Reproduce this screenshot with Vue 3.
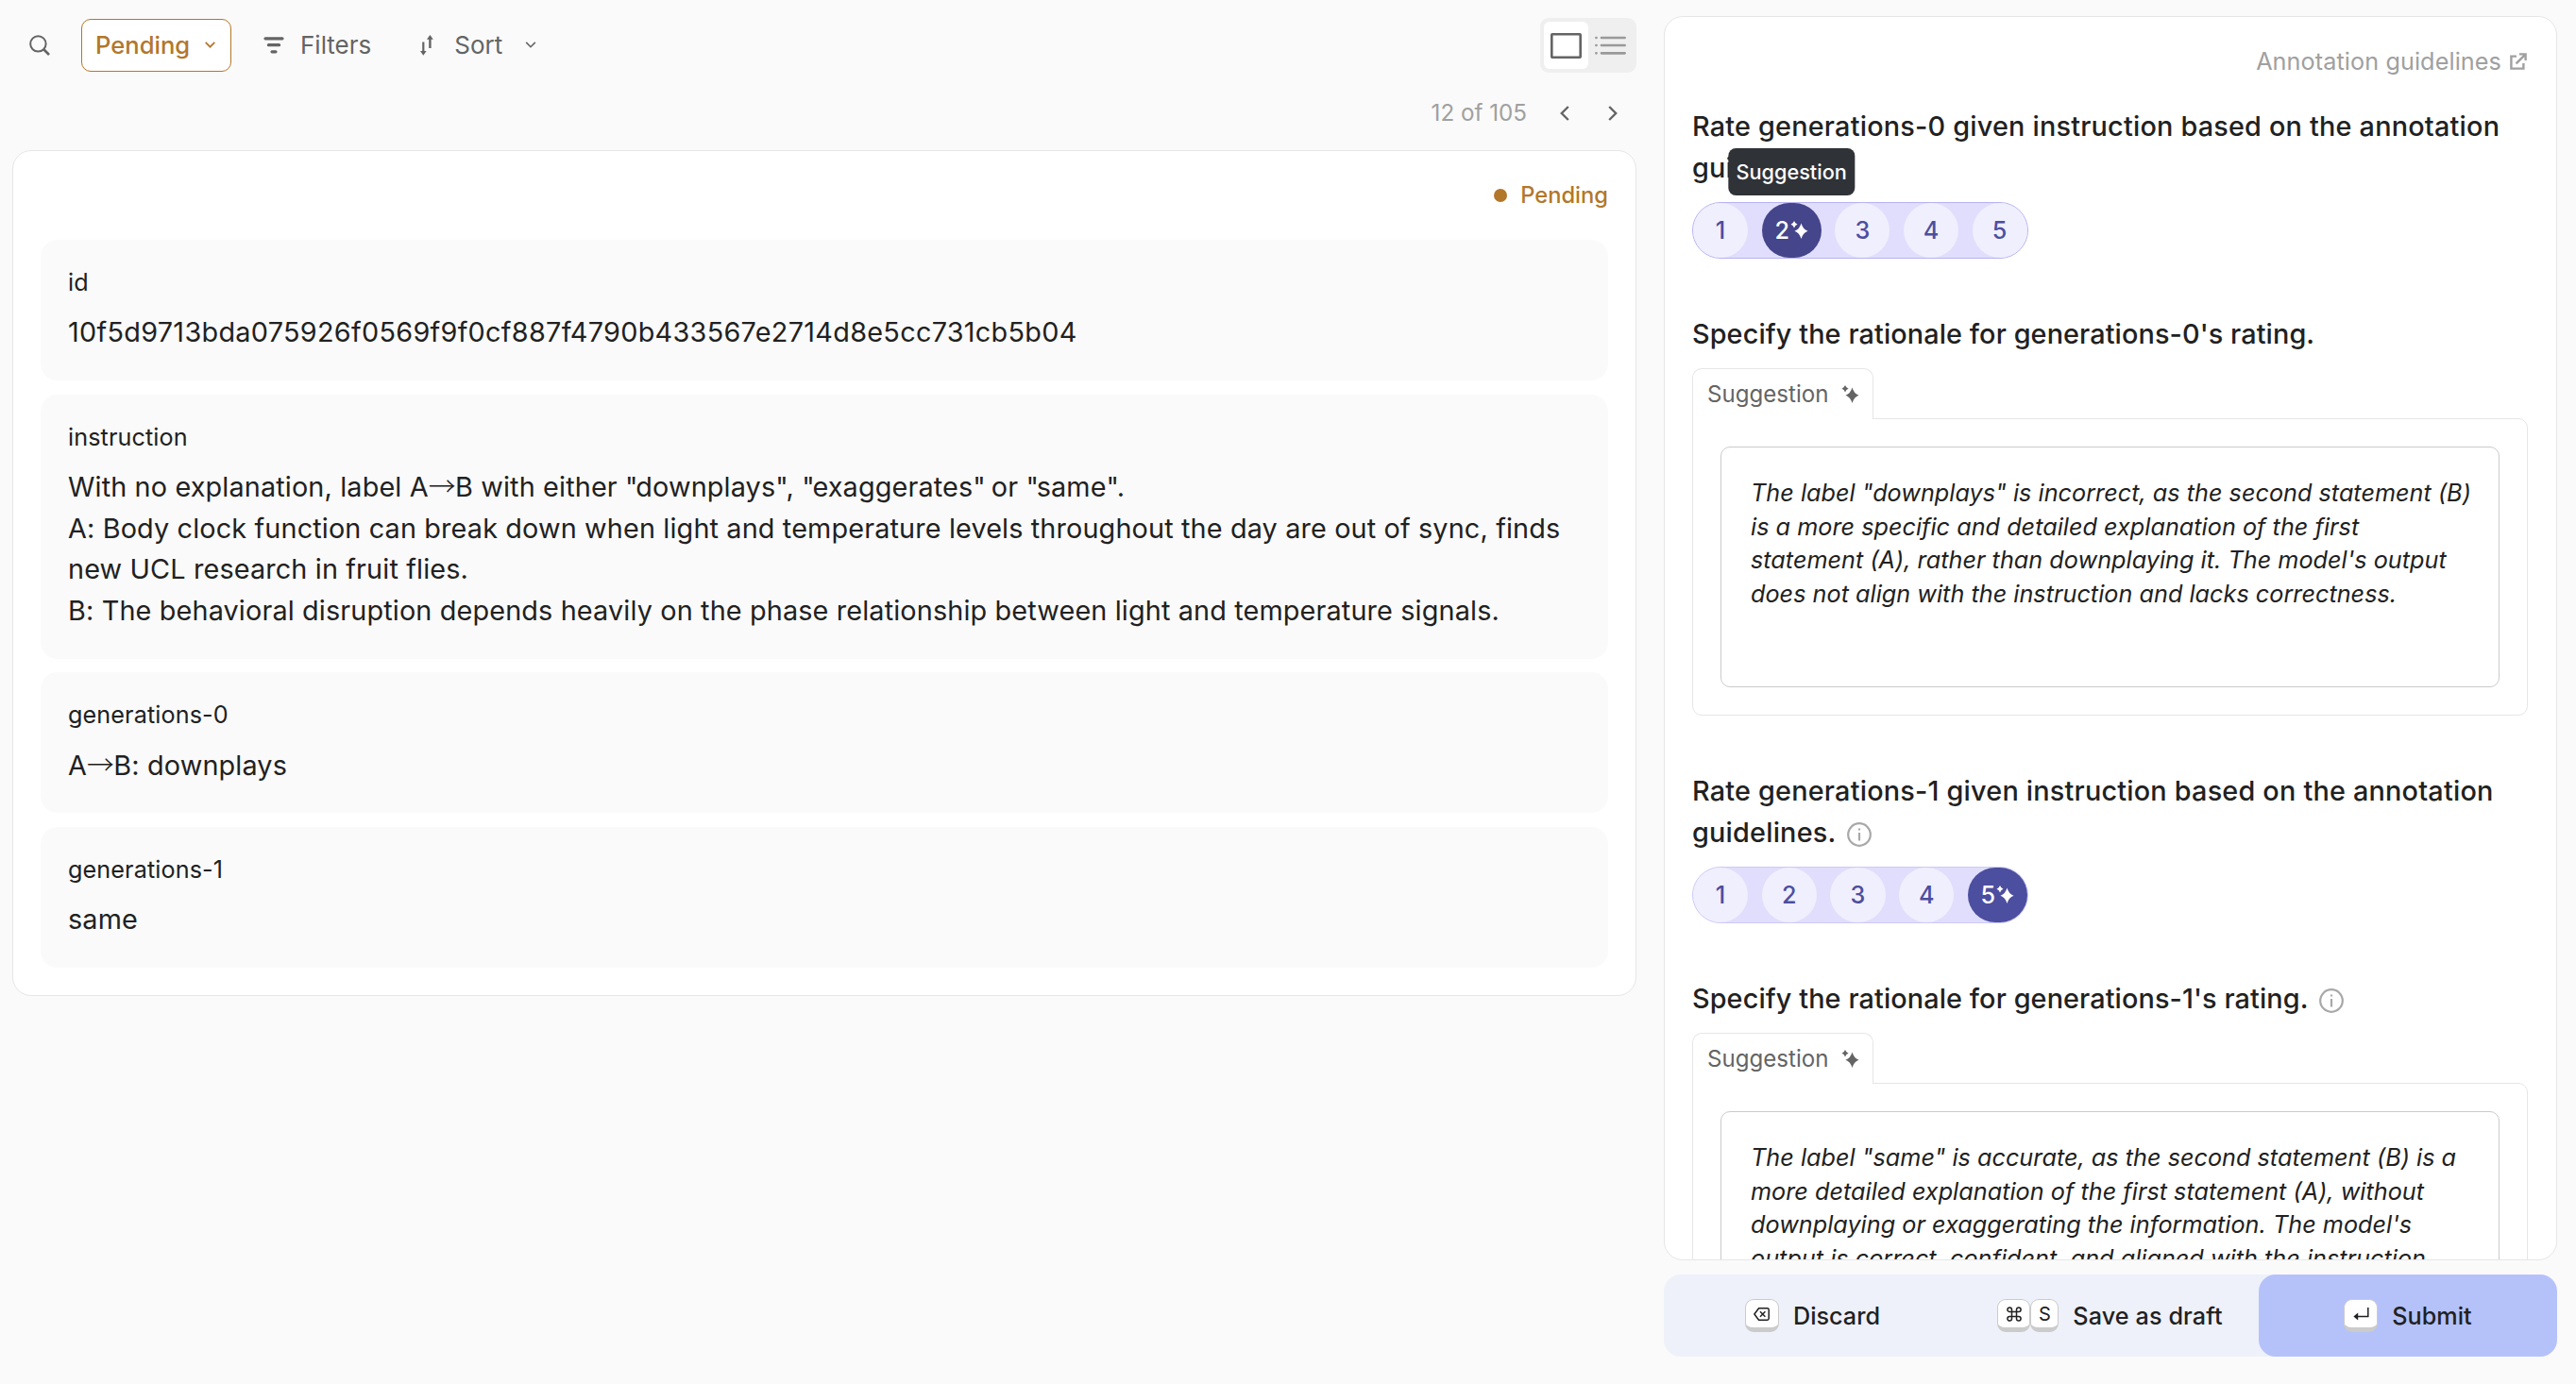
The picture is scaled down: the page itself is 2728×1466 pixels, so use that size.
<script setup>
import { ref } from 'vue'

const fields = [
  { name: 'id', lines: ['10f5d9713bda075926f0569f9f0cf887f4790b433567e2714d8e5cc731cb5b04'] },
  {
    name: 'instruction',
    lines: [
      'With no explanation, label A→B with either "downplays", "exaggerates" or "same".',
      'A: Body clock function can break down when light and temperature levels throughout the day are out of sync, finds new UCL research in fruit flies.',
      'B: The behavioral disruption depends heavily on the phase relationship between light and temperature signals.',
    ],
  },
  { name: 'generations-0', lines: ['A→B: downplays'] },
  { name: 'generations-1', lines: ['same'] },
]

// keeps arrows and quotes as their own chunks so they can be styled apart
function chunks(line) {
  return line.split(/([→"])/)
}

const questions = ref([
  {
    id: 'rating-0',
    type: 'rating',
    title: 'Rate generations-0 given instruction based on the annotation guidelines.',
    suggested: 2,
    hovered: true,
    info: false,
  },
  {
    id: 'rationale-0',
    type: 'text',
    title: "Specify the rationale for generations-0's rating.",
    text: 'The label "downplays" is incorrect, as the second statement (B) is a more specific and detailed explanation of the first statement (A), rather than downplaying it. The model\'s output does not align with the instruction and lacks correctness.',
    info: false,
  },
  {
    id: 'rating-1',
    type: 'rating',
    title: 'Rate generations-1 given instruction based on the annotation guidelines.',
    suggested: 5,
    hovered: false,
    info: true,
  },
  {
    id: 'rationale-1',
    type: 'text',
    title: "Specify the rationale for generations-1's rating.",
    text: 'The label "same" is accurate, as the second statement (B) is a more detailed explanation of the first statement (A), without downplaying or exaggerating the information. The model\'s output is correct, confident, and aligned with the instruction given.',
    info: true,
  },
])
</script>

<template>
  <div class="page">
    <main class="record">
      <div class="toolbar">
        <button class="toolbar__search">
          <svg width="22" height="22" viewBox="0 0 22 22" fill="none" stroke="currentColor" stroke-width="2">
            <circle cx="9.4" cy="9.4" r="8.2" />
            <path d="M15 15l6 6" stroke-width="2.6" />
          </svg>
        </button>
        <button class="status-select">
          Pending
          <svg width="11" height="7" viewBox="0 0 11 7" fill="none" stroke="currentColor" stroke-width="1.7">
            <path d="M.7.9l4.8 4.8L10.3.9" />
          </svg>
        </button>
        <button class="toolbar__button">
          <svg width="22" height="18" viewBox="0 0 22 18" fill="none" stroke="currentColor" stroke-width="3.2" stroke-linecap="round">
            <path d="M2 1.8h18M5.4 8.7h11.2M9 15.8h4" />
          </svg>
          Filters
        </button>
        <button class="toolbar__button toolbar__button--sort">
          <svg width="14" height="22" viewBox="0 0 14 22" fill="currentColor">
            <path d="M2.2 7.5h2.2V17h2.2l-3.3 4.8L0 17h2.2zM9.2 14h2.4V4.8h2.2L10.4 0 7 4.8h2.2z" />
          </svg>
          Sort
          <svg width="12" height="7" viewBox="0 0 11 7" fill="none" stroke="currentColor" stroke-width="1.6">
            <path d="M.7.9l4.8 4.8L10.3.9" />
          </svg>
        </button>
        <div class="view-switch">
          <span class="view-switch__item view-switch__item--active">
            <svg width="33" height="27" viewBox="0 0 33 27" fill="none" stroke="currentColor" stroke-width="2.6">
              <rect x="1.3" y="1.3" width="30.4" height="24.4" rx=".6" />
            </svg>
          </span>
          <span class="view-switch__item">
            <svg width="33" height="20" viewBox="0 0 33 20" fill="none" stroke="currentColor" stroke-width="2.7" stroke-linecap="round">
              <path d="M7 2h24.6M7 10h24.6M7 18.3h24.6M1.4 2h.1M1.4 10h.1M1.4 18.3h.1" />
            </svg>
          </span>
        </div>
      </div>

      <div class="pagination">
        <span>12 of 105</span>
        <svg width="10" height="16" viewBox="0 0 10 16" fill="none" stroke="currentColor" stroke-width="2.4">
          <path d="M8.8 1L1.8 8l7 7" />
        </svg>
        <svg width="10" height="16" viewBox="0 0 10 16" fill="none" stroke="currentColor" stroke-width="2.4">
          <path d="M1.2 1l7 7-7 7" />
        </svg>
      </div>

      <article class="card">
        <div class="card__status"><i class="card__dot"></i>Pending</div>
        <section v-for="field in fields" :key="field.name" class="field" :class="`field--${field.name}`">
          <h4 class="field__name">{{ field.name }}</h4>
          <p v-for="(line, i) in field.lines" :key="i" class="field__line">
            <span v-for="(chunk, c) in chunks(line)" :key="c" :class="{ arrow: chunk === '→', quote: chunk === '&quot;' }">{{ chunk }}</span>
          </p>
        </section>
      </article>
    </main>

    <aside class="side">
      <form class="form">
        <a class="guidelines">
          Annotation guidelines
          <svg width="18" height="18" viewBox="0 0 18 18" fill="none" stroke="currentColor" stroke-width="2.4">
            <path d="M7 3.6H1.4v13h13V11M10 1.4h6.6V8M16.4 1.6L6.6 11.4" />
          </svg>
        </a>

        <div v-for="q in questions" :key="q.id" class="question">
          <h3 class="question__title" :class="`question__title--${q.type}`">
            {{ q.title }}
            <svg v-if="q.info" class="question__info" width="26" height="26" viewBox="0 0 26 26" fill="none" stroke="currentColor" stroke-width="2.2">
              <circle cx="13" cy="13" r="11.8" />
              <path d="M13 11v8.4M13 6.4v2" />
            </svg>
          </h3>

          <div v-if="q.type === 'rating'" class="rating" :class="{ 'rating--hover': q.hovered }">
            <span v-for="n in 5" :key="n" class="rating__item" :class="{ 'rating__item--on': n === q.suggested }">
              {{ n }}
              <svg v-if="n === q.suggested" class="rating__spark" width="19" height="20" viewBox="0 0 18 20" fill="currentColor">
                <path d="M11 2.5q1.8 6.4 7 8.3-5.2 1.9-7 8.3-1.8-6.4-7-8.3 5.2-1.9 7-8.3zM3.5 0q1 2.8 3.5 3.7Q4.5 4.6 3.5 7.4 2.5 4.6 0 3.7 2.5 2.8 3.5 0z" />
              </svg>
              <span v-if="q.hovered && n === q.suggested" class="tooltip">Suggestion</span>
            </span>
          </div>

          <div v-else class="suggestion">
            <div class="suggestion__tab">
              Suggestion
              <svg width="19" height="20" viewBox="0 0 18 20" fill="currentColor">
                <path d="M11 2.5q1.8 6.4 7 8.3-5.2 1.9-7 8.3-1.8-6.4-7-8.3 5.2-1.9 7-8.3zM3.5 0q1 2.8 3.5 3.7Q4.5 4.6 3.5 7.4 2.5 4.6 0 3.7 2.5 2.8 3.5 0z" />
              </svg>
            </div>
            <div class="suggestion__panel">
              <div class="suggestion__text">{{ q.text }}</div>
            </div>
          </div>
        </div>
      </form>

      <div class="actions">
        <button class="action action--discard">
          <kbd class="key key--wide">
            <svg width="17" height="14" viewBox="0 0 17 14" fill="none" stroke="currentColor" stroke-width="1.5">
              <path d="M5.6.8h9q1.6 0 1.6 1.6v9.2q0 1.6-1.6 1.6h-9L.9 7z" stroke-linejoin="round" />
              <path d="M7 4.3l5.4 5.4M12.4 4.3L7 9.7" />
            </svg>
          </kbd>
          Discard
        </button>
        <button class="action action--draft">
          <span class="keys">
            <kbd class="key key--cmd">
              <svg width="16" height="16" viewBox="0 0 16 16" fill="none" stroke="currentColor" stroke-width="1.5">
                <path d="M5.5 3.2v9.6a2.3 2.3 0 1 1-2.3-2.3h9.6a2.3 2.3 0 1 1-2.3 2.3V3.2a2.3 2.3 0 1 1 2.3 2.3H3.2a2.3 2.3 0 1 1 2.3-2.3z" />
              </svg>
            </kbd>
            <kbd class="key key--letter">S</kbd>
          </span>
          Save as draft
        </button>
        <button class="action action--submit">
          <kbd class="key key--wide">
            <svg width="17" height="14" viewBox="0 0 17 14" fill="none" stroke="currentColor" stroke-width="1.5">
              <path d="M15.8 0v9.5H3" />
              <path d="M5.2 5.5v8L.4 9.5z" fill="currentColor" stroke="none" />
            </svg>
          </kbd>
          Submit
        </button>
      </div>
    </aside>
  </div>
</template>

<style>
body {
  background: #fafafa;
}
</style>

<style scoped>
.page {
  display: grid;
  grid-template-columns: 1720px 946px;
  column-gap: 29px;
  box-sizing: border-box;
  height: 100vh;
  padding: 17px 20px 29px 13px;
  overflow: hidden;
  font-family: Inter, 'Liberation Sans', sans-serif;
  font-size: 25.2px;
  color: #212121;
}
.page * {
  box-sizing: border-box;
}
button {
  padding: 0;
  border: 0;
  background: none;
  color: inherit;
  font: inherit;
}
svg {
  flex: none;
}

/* toolbar */
.toolbar {
  display: flex;
  align-items: center;
  height: 62px;
  color: #646464;
  font-size: 26px;
}
.toolbar__search {
  display: flex;
  margin: 0 33px 0 18px;
}
.status-select {
  display: flex;
  align-items: center;
  gap: 16px;
  width: 159px;
  height: 56px;
  padding: 0 0 1px 14px;
  border: 1px solid #b3772a;
  border-radius: 10px;
  background: #fff;
  color: #b3772a;
  font-size: 25.6px;
  font-weight: 500;
}
.toolbar__button {
  display: flex;
  align-items: center;
  gap: 17px;
  margin-left: 34px;
  padding-bottom: 1px;
}
.toolbar__button--sort {
  gap: 22px;
  margin-left: 52px;
}
.toolbar__button--sort svg:last-child {
  margin-left: 2px;
}
.view-switch {
  display: flex;
  width: 102px;
  height: 58px;
  margin-left: auto;
  padding: 4px;
  border-radius: 9px;
  background: #efefef;
  color: #999;
}
.view-switch__item {
  display: flex;
  align-items: center;
  justify-content: center;
  width: 47px;
  border-radius: 6px;
}
.view-switch__item--active {
  background: #fff;
  color: #646464;
}

.pagination {
  display: flex;
  align-items: center;
  justify-content: flex-end;
  gap: 41px;
  height: 80px;
  padding: 1px 20px 0 0;
  color: #646464;
}
.pagination span {
  margin-right: -6px;
  color: #a0a0a0;
  font-size: 24.2px;
}

/* record card */
.card {
  display: flex;
  flex-direction: column;
  gap: 14.6px;
  padding: 0 29px 29px;
  border: 1px solid #e6e6e6;
  border-radius: 20px;
  background: #fff;
}
.card__status {
  display: flex;
  align-items: center;
  justify-content: flex-end;
  gap: 14px;
  height: 79.4px;
  padding-top: 14px;
  color: #b3772a;
  font-size: 23.7px;
  font-weight: 500;
}
.card__dot {
  width: 14px;
  height: 14px;
  border-radius: 50%;
  background: #b3772a;
}
.field {
  padding: 29px;
  border-radius: 18px;
  background: #fafafa;
}
.field__name {
  margin: 0 0 15px;
  font-size: 25.2px;
  font-weight: 400;
  line-height: 32.5px;
  letter-spacing: 0.1px;
}
.field__line {
  margin: 0;
  font-size: 28.8px;
  line-height: 43.6px;
  letter-spacing: 0.145px;
}
.field--id .field__line {
  letter-spacing: 0.3px;
}
.arrow {
  font-family: 'Noto Sans CJK JP', sans-serif;
  font-weight: 300;
  line-height: 1;
  letter-spacing: -0.5px;
}
.quote {
  letter-spacing: -2.2px;
}

/* questions */
.side {
  display: flex;
  flex-direction: column;
  gap: 15px;
  min-height: 0;
}
.form {
  flex: 1;
  min-height: 0;
  padding: 30px 30px 0 29px;
  border: 1px solid #e6e6e6;
  border-radius: 20px;
  background: #fff;
  overflow: hidden;
}
.guidelines {
  display: flex;
  align-items: center;
  justify-content: flex-end;
  gap: 9px;
  height: 34px;
  margin-bottom: 29.5px;
  padding-right: 1px;
  color: #a0a0a0;
  letter-spacing: 0.1px;
}
.question {
  margin-bottom: 57.5px;
}
.question__title {
  margin: 0 0 14.5px;
  font-size: 28.8px;
  font-weight: 500;
  line-height: 44px;
}
.question__title--rating {
  letter-spacing: 0.21px;
}
.question__title--text {
  letter-spacing: 0.11px;
}
.question__info {
  margin-left: 4px;
  vertical-align: -5px;
  color: #a8a8a8;
}
.rating {
  display: flex;
  gap: 14.5px;
  width: max-content;
  height: 60px;
  border: 1px solid #cdcaf8;
  border-radius: 30px;
  background: #e0defc;
}
.rating--hover {
  border-color: #b7b3f2;
}
.rating__item {
  position: relative;
  display: flex;
  align-items: center;
  justify-content: center;
  width: 58.2px;
  border-radius: 30px;
  background: #f0effd;
  color: #4c4e9f;
  font-weight: 500;
}
.rating__item--on {
  width: 63px;
  background: #4c4e9f;
  color: #fff;
}
.rating--hover .rating__item--on {
  background: #45458b;
}
.rating__spark {
  margin-left: 1px;
}
.tooltip {
  position: absolute;
  bottom: 66px;
  left: 50%;
  height: 50px;
  padding: 0 8px;
  border-radius: 8px;
  background: #2f3237;
  color: #fff;
  font-size: 21.7px;
  line-height: 50px;
  transform: translateX(-50%);
}
.suggestion__tab {
  position: relative;
  display: flex;
  align-items: center;
  gap: 14px;
  width: 192px;
  height: 54px;
  margin-bottom: -1px;
  padding-left: 15px;
  border: 1px solid #e6e6e6;
  border-bottom: 0;
  border-radius: 10px 10px 0 0;
  background: #fff;
  color: #646464;
  font-size: 24.1px;
}
.suggestion__panel {
  padding: 29px;
  border: 1px solid #e6e6e6;
  border-radius: 0 10px 10px 10px;
}
.suggestion__text {
  min-height: 255px;
  padding: 31px 26px 30px 31px;
  border: 1px solid #cbcbcb;
  border-radius: 10px;
  font-style: italic;
  line-height: 35.7px;
  letter-spacing: 0.03px;
}

/* footer */
.actions {
  display: flex;
  height: 87px;
  border-radius: 18px;
  background: #eef1fa;
}
.action {
  display: flex;
  align-items: center;
  justify-content: center;
  gap: 15px;
  width: 315px;
  border-radius: 18px;
  font-size: 25.2px;
  font-weight: 500;
}
.action--draft {
  letter-spacing: 0.1px;
}
.action--submit {
  width: 316px;
  background: #b5c2fa;
}
.keys {
  display: flex;
}
.key {
  display: flex;
  align-items: center;
  justify-content: center;
  height: 35px;
  border: 1px solid #cbcbcb;
  border-bottom-width: 5px;
  border-radius: 9px;
  background: #fff;
  font-family: inherit;
  font-size: 20px;
  font-weight: 400;
}
.key--wide {
  width: 36px;
}
.key--cmd {
  width: 35px;
}
.key--letter {
  width: 30px;
}
</style>
